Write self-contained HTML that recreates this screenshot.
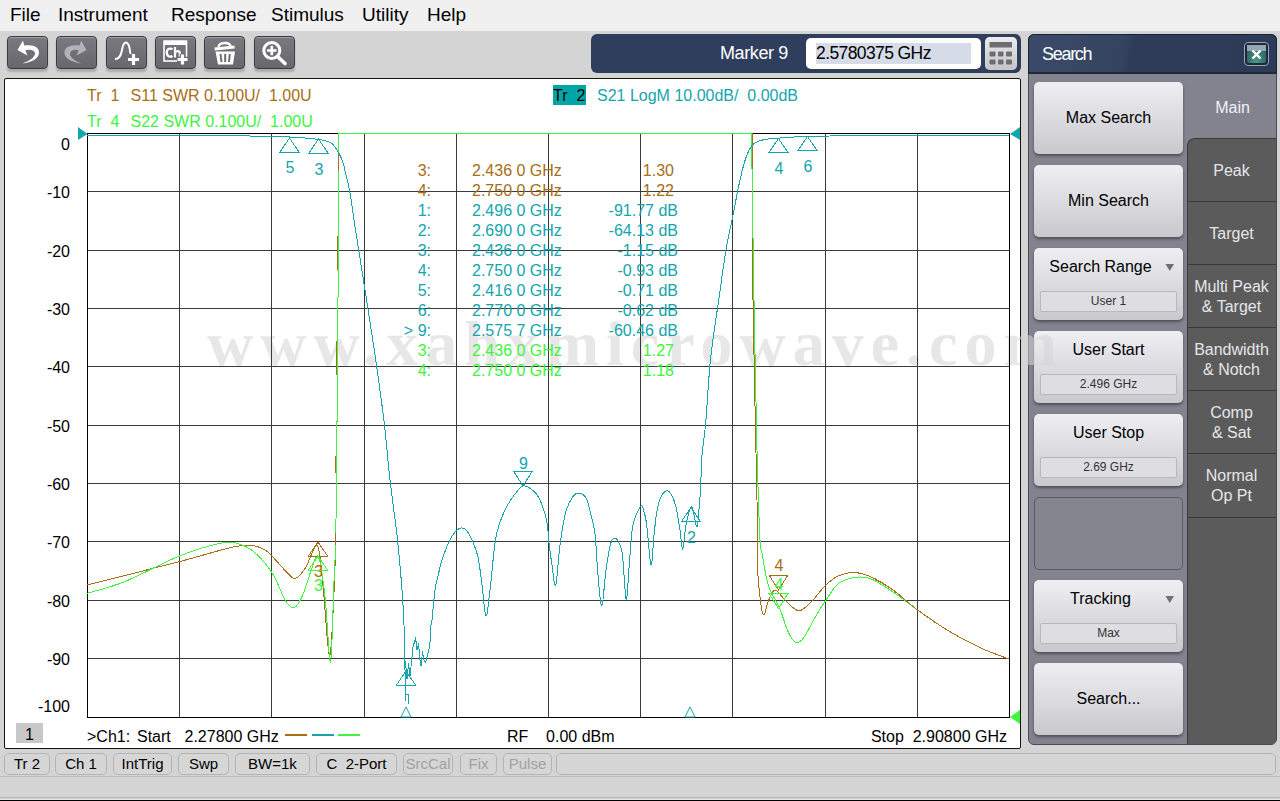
<!DOCTYPE html>
<html><head><meta charset="utf-8">
<style>
*{margin:0;padding:0;box-sizing:border-box}
html,body{width:1280px;height:801px;overflow:hidden;background:#d4d4d4;font-family:"Liberation Sans", sans-serif;}
.a{position:absolute}
.t{position:absolute;white-space:pre;line-height:1}
.tb{position:absolute;top:36px;width:41px;height:33px;border-radius:4px;background:linear-gradient(#7a797f,#68676d);border:1px solid #3c3c40;box-shadow:inset 0 1px 1px rgba(255,255,255,0.3),0 3px 2px rgba(0,0,0,0.2)}
.btn{position:absolute;left:1034px;width:149px;border-radius:5px;background:linear-gradient(#efeef2,#c9c8cc);box-shadow:0 2px 3px rgba(0,0,0,0.4);}
.bl{position:absolute;left:0;width:149px;text-align:center;font-size:16px;color:#000;line-height:1}
.sub{position:absolute;left:6px;width:137px;height:21px;border:1px solid #b8b8bc;background:#dedde2;border-radius:2px;text-align:center;font-size:12px;line-height:19px;color:#333}
.tab{position:absolute;left:1187px;width:89px;height:63px;background:#5b5b5b;border-top:1px solid #3c3c3c;color:#e8e8ec;font-size:16px;text-align:center;line-height:20px}
.sb{position:absolute;white-space:pre;top:753px;height:22px;border:1px solid #b4b4b4;border-radius:5px;background:#d6d6d6;font-size:15px;line-height:20px;text-align:center;color:#000}
</style></head><body>

<div class="a" style="left:0;top:0;width:1280px;height:31px;background:#f0f0f0"></div>
<div class="t" style="left:10px;top:5px;font-size:19px;color:#000">File</div>
<div class="t" style="left:58px;top:5px;font-size:19px;color:#000">Instrument</div>
<div class="t" style="left:171px;top:5px;font-size:19px;color:#000">Response</div>
<div class="t" style="left:271px;top:5px;font-size:19px;color:#000">Stimulus</div>
<div class="t" style="left:362px;top:5px;font-size:19px;color:#000">Utility</div>
<div class="t" style="left:427px;top:5px;font-size:19px;color:#000">Help</div>
<div class="tb" style="left:7px"><svg width="41" height="33" style="position:absolute;left:-1px;top:-1px"><path d="M10.5,14 L16,4.5 L17.2,9.6 C26,8 32.5,11 32,17 C31.5,23 24,26.5 15.5,27.5 C23,24.5 28,21 28,17.5 C28,13.5 22,13 18.2,14.2 L20.5,19.5 Z" fill="#fff"/></svg></div>
<div class="tb" style="left:56px"><svg width="41" height="33" style="position:absolute;left:-1px;top:-1px"><path d="M30.5,14 L25,4.5 L23.8,9.6 C15,8 8,11 8.5,17 C9,23 17,26.5 25.5,27.5 C19,25 13.5,21 14,17.5 C14.5,13.5 19,13 22.8,14.2 L20.5,19.5 Z" fill="#b4b4b8"/></svg></div>
<div class="tb" style="left:106px"><svg width="41" height="33" style="position:absolute;left:-1px;top:-1px"><path d="M9,23 C13,23 15,20 16,14 C17,8 18.5,6.5 20,6.5 C22,6.5 23.5,9 24.5,18" fill="none" stroke="#fff" stroke-width="2"/><path d="M27.5,18 V29 M22,23.5 H33" stroke="#fff" stroke-width="3.2"/></svg></div>
<div class="tb" style="left:155px"><svg width="41" height="33" style="position:absolute;left:-1px;top:-1px"><rect x="9" y="5.2" width="22.5" height="19.8" fill="none" stroke="#fff" stroke-width="1.6"/><rect x="9" y="4.6" width="22.5" height="4.4" fill="#fff"/><path d="M17.5,13.2 C15.5,12 11.8,12.2 11.8,16.6 C11.8,21 15.5,21.2 17.5,20" fill="none" stroke="#fff" stroke-width="2.3"/><path d="M20,11 V21.5 M20,17 C21,14.5 24.8,14.5 24.8,17 V21.5" fill="none" stroke="#fff" stroke-width="2.2"/><path d="M27.5,18 V29 M22,23.5 H33" stroke="#6e6d72" stroke-width="5.5"/><path d="M27.5,18.5 V28.5 M22.5,23.5 H32.5" stroke="#fff" stroke-width="3.2"/></svg></div>
<div class="tb" style="left:204px"><svg width="41" height="33" style="position:absolute;left:-1px;top:-1px"><path d="M14.5,11 C15,6 26,5.5 26.5,10.5" fill="none" stroke="#fff" stroke-width="2.4"/><path d="M10.5,11.5 L30.5,9.5 L30.7,12.6 L10.8,14.6 Z" fill="#fff"/><path d="M11.5,15.5 H31 L29,28.5 H14 Z" fill="#fff"/><path d="M16.5,18 L17.5,26 M21.2,18 V26 M25.8,18 L25,26" stroke="#6e6d72" stroke-width="2"/></svg></div>
<div class="tb" style="left:254px"><svg width="41" height="33" style="position:absolute;left:-1px;top:-1px"><circle cx="17.8" cy="14.5" r="8" fill="none" stroke="#fff" stroke-width="3"/><path d="M17.8,9.8 V19.2 M13.1,14.5 H22.5" stroke="#fff" stroke-width="2.6"/><path d="M23.5,20.5 L31,27.5" stroke="#fff" stroke-width="3.6" stroke-linecap="round"/></svg></div>
<div class="a" style="left:591px;top:34px;width:430px;height:39px;background:#2f3e5d;border-radius:6px"></div>
<div class="t" style="left:720px;top:44px;font-size:18px;letter-spacing:-0.4px;color:#fff">Marker 9</div>
<div class="a" style="left:806px;top:38px;width:175px;height:31px;background:#fff;border-radius:5px"></div>
<div class="a" style="left:816px;top:43px;width:155px;height:21px;background:#d6dce7"></div>
<div class="t" style="left:816px;top:45px;font-size:17.5px;letter-spacing:-0.6px;color:#000">2.5780375 GHz</div>
<div class="a" style="left:985px;top:37px;width:32px;height:33px;background:linear-gradient(#ececee,#c4c4c8);border-radius:5px;box-shadow:inset 0 0 1px #fff"><svg width="32" height="33" style="position:absolute;left:0;top:0"><rect x="4.5" y="5" width="22.5" height="5.5" fill="#6e6e6e"/><g fill="#6e6e6e"><rect x="4.5" y="14.5" width="6" height="5" rx="1"/><rect x="13" y="14.5" width="5.5" height="5" rx="1"/><rect x="21" y="14.5" width="6" height="5" rx="1"/><rect x="4.5" y="22.5" width="6" height="5" rx="1"/><rect x="13" y="22.5" width="5.5" height="5" rx="1"/><rect x="21" y="22.5" width="6" height="5" rx="1"/></g></svg></div>
<div class="a" style="left:4px;top:78px;width:1017px;height:671px;background:#fff;border:1px solid #141408;border-radius:2px"></div>
<div class="a" style="left:1028px;top:34px;width:249px;height:711px;background:#838390;border-radius:6px;border:1px solid #4a4a52"></div>
<div class="a" style="left:1028px;top:34px;width:249px;height:40px;background:linear-gradient(100deg,#3a4a69 0%,#34445f 38%,#2e3c5a 42%,#2d3b58 100%);border:1px solid #1c2232;border-bottom:2px solid #1f2738;border-radius:6px 6px 0 0"></div>
<div class="t" style="left:1042px;top:45px;font-size:18px;letter-spacing:-1.3px;color:#fff">Search</div>
<div class="a" style="left:1244px;top:42px;width:25px;height:24px;border:1px solid #9aa2b4;border-radius:4px;background:#1c2a3a"><div class="a" style="left:2px;top:2px;width:19px;height:18px;border-radius:2px;background:radial-gradient(ellipse at 50% 100%,#4c9a88,#2a5660)"></div><div class="a" style="left:2px;top:2px;width:19px;height:6px;background:#96a6b2"></div><svg width="23" height="22" style="position:absolute;left:0;top:0"><path d="M7.5,7.5 L15.5,15.5 M15.5,7.5 L7.5,15.5" stroke="#fff" stroke-width="2.4"/></svg></div>
<div class="t" style="left:1188px;top:100px;width:89px;text-align:center;font-size:16px;color:#f0f0f4">Main</div>
<div class="a" style="left:1187px;top:138px;width:89px;height:606px;background:#5b5b5b;border-radius:8px 0 0 0;border-bottom-right-radius:5px;border-top:1px solid #3a3a32;border-left:1px solid #3a3a32"></div>
<div class="t" style="left:1187px;top:163px;width:89px;text-align:center;font-size:16px;color:#e6e6ea">Peak</div>
<div class="a" style="left:1187px;top:201px;width:89px;height:1px;background:#3a3a3a"></div>
<div class="t" style="left:1187px;top:226px;width:89px;text-align:center;font-size:16px;color:#e6e6ea">Target</div>
<div class="a" style="left:1187px;top:264px;width:89px;height:1px;background:#3a3a3a"></div>
<div class="t" style="left:1187px;top:279px;width:89px;text-align:center;font-size:16px;color:#e6e6ea">Multi Peak</div>
<div class="t" style="left:1187px;top:299px;width:89px;text-align:center;font-size:16px;color:#e6e6ea">&amp; Target</div>
<div class="a" style="left:1187px;top:327px;width:89px;height:1px;background:#3a3a3a"></div>
<div class="t" style="left:1187px;top:342px;width:89px;text-align:center;font-size:16px;color:#e6e6ea">Bandwidth</div>
<div class="t" style="left:1187px;top:362px;width:89px;text-align:center;font-size:16px;color:#e6e6ea">&amp; Notch</div>
<div class="a" style="left:1187px;top:390px;width:89px;height:1px;background:#3a3a3a"></div>
<div class="t" style="left:1187px;top:405px;width:89px;text-align:center;font-size:16px;color:#e6e6ea">Comp</div>
<div class="t" style="left:1187px;top:425px;width:89px;text-align:center;font-size:16px;color:#e6e6ea">&amp; Sat</div>
<div class="a" style="left:1187px;top:453px;width:89px;height:1px;background:#3a3a3a"></div>
<div class="t" style="left:1187px;top:468px;width:89px;text-align:center;font-size:16px;color:#e6e6ea">Normal</div>
<div class="t" style="left:1187px;top:488px;width:89px;text-align:center;font-size:16px;color:#e6e6ea">Op Pt</div>
<div class="a" style="left:1187px;top:517px;width:89px;height:1px;background:#3a3a3a"></div>
<div class="btn" style="top:82px;height:72px">
<div class="bl" style="top:28px">Max Search</div>
</div>
<div class="btn" style="top:165px;height:72px">
<div class="bl" style="top:28px">Min Search</div>
</div>
<div class="btn" style="top:248px;height:72px">
<div class="bl" style="top:11px;left:-8px">Search Range</div>
<svg width="12" height="10" style="position:absolute;left:130px;top:14px"><path d="M1.5,2 H10 L5.75,9 Z" fill="#707074"/></svg>
<div class="sub" style="top:43px">User 1</div>
</div>
<div class="btn" style="top:331px;height:72px">
<div class="bl" style="top:11px">User Start</div>
<div class="sub" style="top:43px">2.496 GHz</div>
</div>
<div class="btn" style="top:414px;height:72px">
<div class="bl" style="top:11px">User Stop</div>
<div class="sub" style="top:43px">2.69 GHz</div>
</div>
<div class="a" style="left:1034px;top:497px;width:149px;height:73px;border-radius:5px;background:#85858f;border:1px solid #5a5a62"></div>
<div class="btn" style="top:580px;height:72px">
<div class="bl" style="top:11px;left:-8px">Tracking</div>
<svg width="12" height="10" style="position:absolute;left:130px;top:14px"><path d="M1.5,2 H10 L5.75,9 Z" fill="#707074"/></svg>
<div class="sub" style="top:43px">Max</div>
</div>
<div class="btn" style="top:663px;height:72px">
<div class="bl" style="top:28px">Search...</div>
</div>
<div class="a" style="left:0;top:776px;width:1280px;height:1px;background:#bdbdbd"></div>
<div class="a" style="left:0;top:777px;width:1280px;height:21px;background:#d4d4d4"></div>
<div class="a" style="left:0;top:797px;width:1280px;height:1px;background:#b6b6b6"></div>
<div class="a" style="left:0;top:798px;width:1280px;height:1px;background:#d2d2d2"></div>
<div class="a" style="left:0;top:799px;width:1280px;height:1px;background:#e2e2e2"></div>
<div class="a" style="left:0;top:800px;width:1280px;height:1px;background:#000"></div>
<div class="sb" style="left:4px;width:46px;color:#000">Tr 2</div>
<div class="sb" style="left:55px;width:52px;color:#000">Ch 1</div>
<div class="sb" style="left:113px;width:59px;color:#000">IntTrig</div>
<div class="sb" style="left:178px;width:51px;color:#000">Swp</div>
<div class="sb" style="left:235px;width:75px;color:#000">BW=1k</div>
<div class="sb" style="left:316px;width:81px;color:#000">C  2-Port</div>
<div class="sb" style="left:403px;width:50px;color:#a0a0a0">SrcCal</div>
<div class="sb" style="left:460px;width:37px;color:#a0a0a0">Fix</div>
<div class="sb" style="left:503px;width:49px;color:#a0a0a0">Pulse</div>
<div class="sb" style="left:556px;width:720px;color:#000"></div>
<svg class="a" style="left:0;top:0" width="1280" height="801"><text x="207" y="365" font-family="Liberation Serif" font-weight="bold" font-size="64" fill="rgb(212,212,212)" fill-opacity="0.56" letter-spacing="7">www.xahxmicrowave.com</text></svg>
<svg class="a" style="left:0;top:0" width="1280" height="801">
<line x1="179.5" y1="133" x2="179.5" y2="718" stroke="#3a3a3a" stroke-width="1"/>
<line x1="271.5" y1="133" x2="271.5" y2="718" stroke="#3a3a3a" stroke-width="1"/>
<line x1="364.5" y1="133" x2="364.5" y2="718" stroke="#3a3a3a" stroke-width="1"/>
<line x1="456.5" y1="133" x2="456.5" y2="718" stroke="#3a3a3a" stroke-width="1"/>
<line x1="548.5" y1="133" x2="548.5" y2="718" stroke="#3a3a3a" stroke-width="1"/>
<line x1="640.5" y1="133" x2="640.5" y2="718" stroke="#3a3a3a" stroke-width="1"/>
<line x1="732.5" y1="133" x2="732.5" y2="718" stroke="#3a3a3a" stroke-width="1"/>
<line x1="825.5" y1="133" x2="825.5" y2="718" stroke="#3a3a3a" stroke-width="1"/>
<line x1="917.5" y1="133" x2="917.5" y2="718" stroke="#3a3a3a" stroke-width="1"/>
<line x1="87" y1="191.5" x2="1010" y2="191.5" stroke="#3a3a3a" stroke-width="1"/>
<line x1="87" y1="250.5" x2="1010" y2="250.5" stroke="#3a3a3a" stroke-width="1"/>
<line x1="87" y1="308.5" x2="1010" y2="308.5" stroke="#3a3a3a" stroke-width="1"/>
<line x1="87" y1="366.5" x2="1010" y2="366.5" stroke="#3a3a3a" stroke-width="1"/>
<line x1="87" y1="425.5" x2="1010" y2="425.5" stroke="#3a3a3a" stroke-width="1"/>
<line x1="87" y1="483.5" x2="1010" y2="483.5" stroke="#3a3a3a" stroke-width="1"/>
<line x1="87" y1="541.5" x2="1010" y2="541.5" stroke="#3a3a3a" stroke-width="1"/>
<line x1="87" y1="600.5" x2="1010" y2="600.5" stroke="#3a3a3a" stroke-width="1"/>
<line x1="87" y1="658.5" x2="1010" y2="658.5" stroke="#3a3a3a" stroke-width="1"/>
<rect x="87.5" y="133.5" width="922" height="584" fill="none" stroke="#000" stroke-width="1"/>
<path d="M87.00,585.00 C102.42,581.10 155.17,567.93 179.50,561.60 C203.83,555.27 220.78,549.67 233.00,547.00 C245.22,544.33 247.30,545.00 252.80,545.60 C258.30,546.20 261.97,547.93 266.00,550.60 C270.03,553.27 273.33,557.77 277.00,561.60 C280.67,565.43 284.92,570.80 288.00,573.60 C291.08,576.40 292.60,579.33 295.50,578.40 C298.40,577.47 301.75,573.40 305.40,568.00 C309.05,562.60 314.47,543.07 317.40,546.00 C320.33,548.93 321.00,567.32 323.00,585.60 C325.00,603.88 327.60,653.87 329.40,655.70 C331.20,657.53 332.70,619.22 333.80,596.60 C334.90,573.98 335.30,569.43 336.00,520.00 C336.70,470.57 337.58,364.42 338.00,300.00 C338.42,235.58 338.42,161.25 338.50,133.50" fill="none" stroke="#a86e14" stroke-width="1.0" shape-rendering="crispEdges" />
<polyline points="338.5,133.5 752.0,133.5" fill="none" stroke="#a86e14" stroke-width="1.0" stroke-linejoin="round" shape-rendering="crispEdges" />
<path d="M752.00,133.50 C752.17,161.25 752.17,238.92 753.00,300.00 C753.83,361.08 756.25,455.67 757.00,500.00 C757.50,544.33 757.00,548.83 757.50,566.00 C758.13,583.17 759.72,594.83 760.80,603.00 C761.88,611.17 762.73,615.33 764.00,615.00 C765.27,614.67 766.57,605.17 768.40,601.00 C770.23,596.83 772.07,590.00 775.00,590.00 C777.93,590.00 782.00,597.53 786.00,601.00 C790.00,604.47 794.67,610.80 799.00,610.80 C803.33,610.80 807.62,605.20 812.00,601.00 C816.38,596.80 820.88,589.80 825.30,585.60 C829.72,581.40 833.75,577.98 838.50,575.80 C843.25,573.62 848.33,572.30 853.80,572.50 C859.27,572.70 864.77,574.08 871.30,577.00 C877.83,579.92 885.35,584.55 893.00,590.00 C900.65,595.45 908.05,602.95 917.20,609.70 C926.35,616.45 937.32,624.12 947.90,630.50 C958.48,636.88 970.52,643.25 980.70,648.00 C990.88,652.75 1004.28,657.17 1009.00,659.00" fill="none" stroke="#a86e14" stroke-width="1.0" shape-rendering="crispEdges" />
<path d="M87.00,593.30 C93.13,591.42 108.38,588.22 123.80,582.00 C139.22,575.78 163.47,562.43 179.50,556.00 C195.53,549.57 210.33,545.50 220.00,543.40 C229.67,541.30 231.67,541.83 237.50,543.40 C243.33,544.97 249.17,547.77 255.00,552.80 C260.83,557.83 267.38,565.57 272.50,573.60 C277.62,581.63 282.05,595.35 285.70,601.00 C289.35,606.65 291.52,608.60 294.40,607.50 C297.28,606.40 300.07,600.98 303.00,594.40 C305.93,587.82 309.42,574.23 312.00,568.00 C314.58,561.77 316.33,552.23 318.50,557.00 C320.67,561.77 323.00,579.10 325.00,596.60 C327.00,614.10 329.03,663.83 330.50,662.00 C331.97,660.17 332.88,609.27 333.80,585.60 C334.72,561.93 335.30,567.60 336.00,520.00 C336.70,472.40 337.58,364.42 338.00,300.00 C338.42,235.58 338.42,161.25 338.50,133.50" fill="none" stroke="#3cf53c" stroke-width="1.0" shape-rendering="crispEdges" />
<polyline points="338.5,133.5 751.5,133.5" fill="none" stroke="#3cf53c" stroke-width="1.0" stroke-linejoin="round" shape-rendering="crispEdges" />
<path d="M751.50,133.50 C751.92,161.25 753.08,247.25 754.00,300.00 C754.92,352.75 756.00,410.00 757.00,450.00 C758.00,490.00 759.17,522.87 760.00,540.00 C760.83,557.13 760.60,545.20 762.00,552.80 C763.40,560.40 765.50,576.48 768.40,585.60 C771.30,594.72 776.13,599.83 779.40,607.50 C782.67,615.17 785.27,625.77 788.00,631.60 C790.73,637.43 793.22,641.43 795.80,642.50 C798.38,643.57 800.40,642.00 803.50,638.00 C806.60,634.00 810.77,624.67 814.40,618.50 C818.03,612.33 821.28,606.83 825.30,601.00 C829.32,595.17 833.38,587.45 838.50,583.50 C843.62,579.55 850.53,578.05 856.00,577.30 C861.47,576.55 865.13,576.55 871.30,579.00 C877.47,581.45 885.35,586.88 893.00,592.00 C900.65,597.12 908.05,603.28 917.20,609.70 C926.35,616.12 937.32,624.12 947.90,630.50 C958.48,636.88 970.52,643.25 980.70,648.00 C990.88,652.75 1004.28,657.17 1009.00,659.00" fill="none" stroke="#3cf53c" stroke-width="1.0" shape-rendering="crispEdges" />
<path d="M871.30,577.00 C874.92,579.17 885.35,584.55 893.00,590.00 C900.65,595.45 908.05,602.95 917.20,609.70 C926.35,616.45 937.32,624.12 947.90,630.50 C958.48,636.88 970.52,643.25 980.70,648.00 C990.88,652.75 1004.28,657.17 1009.00,659.00" fill="none" stroke="#a86e14" stroke-width="1.0" shape-rendering="crispEdges" />
<line x1="338.5" y1="152" x2="338.5" y2="171" stroke="#a86e14" stroke-width="1" shape-rendering="crispEdges"/>
<line x1="337.5" y1="236" x2="337.5" y2="270" stroke="#a86e14" stroke-width="1" shape-rendering="crispEdges"/>
<line x1="336.5" y1="341" x2="336.5" y2="375" stroke="#a86e14" stroke-width="1" shape-rendering="crispEdges"/>
<line x1="335.5" y1="456" x2="335.5" y2="473" stroke="#a86e14" stroke-width="1" shape-rendering="crispEdges"/>
<line x1="335.5" y1="533" x2="335.5" y2="545" stroke="#a86e14" stroke-width="1" shape-rendering="crispEdges"/>
<path d="M87.00,135.50 C114.17,135.58 216.17,135.75 250.00,136.00 C283.83,136.25 280.00,136.58 290.00,137.00 C300.00,137.42 304.67,138.00 310.00,138.50 C315.33,139.00 318.83,139.42 322.00,140.00 C325.17,140.58 327.17,141.25 329.00,142.00 C330.83,142.75 331.67,143.17 333.00,144.50 C334.33,145.83 335.42,147.25 337.00,150.00 C338.58,152.75 341.00,156.83 342.50,161.00 C344.00,165.17 344.75,169.75 346.00,175.00 C347.25,180.25 348.67,185.00 350.00,192.50 C351.33,200.00 352.55,210.42 354.00,220.00 C355.45,229.58 356.87,238.33 358.70,250.00 C360.53,261.67 363.12,278.00 365.00,290.00 C366.88,302.00 368.03,309.10 370.00,322.00 C371.97,334.90 374.42,350.47 376.80,367.40 C379.18,384.33 382.10,404.87 384.30,423.60 C386.50,442.33 387.80,460.45 390.00,479.80 C392.20,499.15 395.50,521.33 397.50,539.70 C399.50,558.07 400.92,575.78 402.00,590.00 C403.08,604.22 403.60,611.67 404.00,625.00 C404.40,638.33 404.33,662.50 404.40,670.00" fill="none" stroke="#14a5ad" stroke-width="1.0" shape-rendering="crispEdges" />
<polyline points="404.4,670.0 405.5,662.0 407.0,679.0 408.5,664.0 410.0,676.0 411.5,662.0 413.0,647.0 415.6,638.0 417.0,650.0 418.5,644.0 420.0,660.0 421.0,666.0 422.5,652.0 424.0,660.0 425.6,663.0 428.8,650.0 430.0,642.5 430.6,627.5 432.0,620.0" fill="none" stroke="#14a5ad" stroke-width="1.0" stroke-linejoin="round" shape-rendering="crispEdges" />
<path d="M432.00,620.00 C432.50,615.00 434.00,597.33 435.00,590.00 C436.00,582.67 436.83,581.00 438.00,576.00 C439.17,571.00 440.00,566.05 442.00,560.00 C444.00,553.95 447.50,544.70 450.00,539.70 C452.50,534.70 455.00,531.95 457.00,530.00 C459.00,528.05 460.33,527.83 462.00,528.00 C463.67,528.17 465.33,529.00 467.00,531.00 C468.67,533.00 470.17,535.67 472.00,540.00 C473.83,544.33 476.33,549.50 478.00,557.00 C479.67,564.50 480.67,575.17 482.00,585.00 C483.33,594.83 484.67,615.17 486.00,616.00 C487.33,616.83 488.33,603.17 490.00,590.00 C491.67,576.83 493.50,550.33 496.00,537.00 C498.50,523.67 501.83,517.17 505.00,510.00 C508.17,502.83 512.00,498.00 515.00,494.00 C518.00,490.00 520.33,486.83 523.00,486.00 C525.67,485.17 528.33,487.00 531.00,489.00 C533.67,491.00 536.38,492.67 539.00,498.00 C541.62,503.33 545.03,513.50 546.70,521.00 C548.37,528.50 548.12,535.67 549.00,543.00 C549.88,550.33 550.88,558.00 552.00,565.00 C553.12,572.00 554.37,588.33 555.70,585.00 C557.03,581.67 558.32,557.17 560.00,545.00 C561.68,532.83 563.80,519.83 565.80,512.00 C567.80,504.17 569.97,501.17 572.00,498.00 C574.03,494.83 575.67,493.00 578.00,493.00 C580.33,493.00 583.83,494.33 586.00,498.00 C588.17,501.67 589.50,509.00 591.00,515.00 C592.50,521.00 593.83,524.00 595.00,534.00 C596.17,544.00 596.87,563.00 598.00,575.00 C599.13,587.00 600.47,606.83 601.80,606.00 C603.13,605.17 604.50,580.50 606.00,570.00 C607.50,559.50 609.07,548.17 610.80,543.00 C612.53,537.83 614.53,537.50 616.40,539.00 C618.27,540.50 620.73,546.00 622.00,552.00 C623.27,558.00 623.25,567.08 624.00,575.00 C624.75,582.92 625.50,602.83 626.50,599.50 C627.50,596.17 628.92,567.42 630.00,555.00 C631.08,542.58 631.22,533.17 633.00,525.00 C634.78,516.83 638.87,508.17 640.70,506.00 C642.53,503.83 643.00,508.83 644.00,512.00 C645.00,515.17 645.53,516.22 646.70,525.00 C647.87,533.78 649.78,563.03 651.00,564.70 C652.22,566.37 653.03,543.78 654.00,535.00 C654.97,526.22 655.63,518.33 656.80,512.00 C657.97,505.67 659.30,500.57 661.00,497.00 C662.70,493.43 665.17,490.77 667.00,490.60 C668.83,490.43 670.50,493.27 672.00,496.00 C673.50,498.73 674.67,501.33 676.00,507.00 C677.33,512.67 678.88,523.00 680.00,530.00 C681.12,537.00 681.70,549.83 682.70,549.00 C683.70,548.17 684.62,532.00 686.00,525.00 C687.38,518.00 689.67,508.67 691.00,507.00 C692.33,505.33 693.00,511.67 694.00,515.00 C695.00,518.33 696.17,528.00 697.00,527.00 C697.83,526.00 698.42,515.17 699.00,509.00 C699.58,502.83 700.00,499.00 700.50,490.00 C701.00,481.00 701.13,466.17 702.00,455.00 C702.87,443.83 704.27,439.10 705.70,423.00 C707.13,406.90 708.43,378.90 710.60,358.40 C712.77,337.90 716.13,318.07 718.70,300.00 C721.27,281.93 723.70,263.75 726.00,250.00 C728.30,236.25 730.17,229.17 732.50,217.50 C734.83,205.83 737.75,190.00 740.00,180.00 C742.25,170.00 743.92,163.33 746.00,157.50 C748.08,151.67 749.75,147.92 752.50,145.00 C755.25,142.08 757.92,141.17 762.50,140.00 C767.08,138.83 768.75,138.67 780.00,138.00 C791.25,137.33 791.83,136.42 830.00,136.00 C868.17,135.58 979.17,135.58 1009.00,135.50" fill="none" stroke="#14a5ad" stroke-width="1.0" shape-rendering="crispEdges" />
<line x1="405.5" y1="670" x2="405.5" y2="701" stroke="#14a5ad" stroke-width="1" shape-rendering="crispEdges"/>
<polygon points="289.5,138 280.0,152 299.0,152" fill="none" stroke="#14a5ad" stroke-width="1" shape-rendering="crispEdges"/>
<text x="290.0" y="173" text-anchor="middle" font-size="16" fill="#14a5ad">5</text>
<polygon points="318.5,139 309.0,153 328.0,153" fill="none" stroke="#14a5ad" stroke-width="1" shape-rendering="crispEdges"/>
<text x="319.0" y="175" text-anchor="middle" font-size="16" fill="#14a5ad">3</text>
<polygon points="778.5,138.5 769.0,152.5 788.0,152.5" fill="none" stroke="#14a5ad" stroke-width="1" shape-rendering="crispEdges"/>
<text x="779.0" y="174" text-anchor="middle" font-size="16" fill="#14a5ad">4</text>
<polygon points="807.5,136.5 798.0,150.5 817.0,150.5" fill="none" stroke="#14a5ad" stroke-width="1" shape-rendering="crispEdges"/>
<text x="808.0" y="172" text-anchor="middle" font-size="16" fill="#14a5ad">6</text>
<polygon points="406,671 396.5,685 415.5,685" fill="none" stroke="#14a5ad" stroke-width="1" shape-rendering="crispEdges"/>
<path d="M406,694.5 H408.5 V704" fill="none" stroke="#14a5ad" stroke-width="1.5" shape-rendering="crispEdges"/>
<polygon points="691,507.5 681.5,521.5 700.5,521.5" fill="none" stroke="#14a5ad" stroke-width="1" shape-rendering="crispEdges"/>
<text x="691.5" y="543" text-anchor="middle" font-size="16" fill="#14a5ad">2</text>
<polygon points="523,486 513.5,471 532.5,471" fill="none" stroke="#14a5ad" stroke-width="1" shape-rendering="crispEdges"/>
<text x="523.5" y="469" text-anchor="middle" font-size="16" fill="#14a5ad">9</text>
<polygon points="318,542 308.5,556 327.5,556" fill="none" stroke="#a86e14" stroke-width="1" shape-rendering="crispEdges"/>
<text x="318.5" y="577" text-anchor="middle" font-size="16" fill="#a86e14">3</text>
<polygon points="318,556 308.5,570 327.5,570" fill="none" stroke="#3cf53c" stroke-width="1" shape-rendering="crispEdges"/>
<text x="318.5" y="591" text-anchor="middle" font-size="16" fill="#3cf53c">3</text>
<polygon points="778.5,590 769.0,575 788.0,575" fill="none" stroke="#a86e14" stroke-width="1" shape-rendering="crispEdges"/>
<text x="779.0" y="571" text-anchor="middle" font-size="16" fill="#a86e14">4</text>
<polygon points="778.5,608.5 769.0,593.5 788.0,593.5" fill="none" stroke="#3cf53c" stroke-width="1" shape-rendering="crispEdges"/>
<text x="779.0" y="590" text-anchor="middle" font-size="16" fill="#3cf53c">4</text>
<polygon points="406,707 401,717 411,717" fill="none" stroke="#14a5ad" stroke-width="1"/>
<polygon points="690,707 685,717 695,717" fill="none" stroke="#14a5ad" stroke-width="1"/>
<polygon points="78,127 87.5,134 78,140" fill="#14a5ad"/>
<polygon points="1020,127 1010,134 1020,140" fill="#14a5ad"/>
<polygon points="1020,710 1010,717 1020,724" fill="#3cf53c"/>
<text x="87" y="101" font-size="16" fill="#a86e14" text-anchor="start"  xml:space="preserve">Tr  1</text>
<text x="130.5" y="101" font-size="16" fill="#a86e14" text-anchor="start"  xml:space="preserve">S11 SWR 0.100U/  1.00U</text>
<text x="87" y="127" font-size="16" fill="#3cf53c" text-anchor="start"  xml:space="preserve">Tr  4</text>
<text x="130.5" y="127" font-size="16" fill="#3cf53c" text-anchor="start"  xml:space="preserve">S22 SWR 0.100U/  1.00U</text>
<rect x="553" y="85" width="33" height="20" fill="#00a6a6"/>
<text x="553" y="101" font-size="16" fill="#000" text-anchor="start"  xml:space="preserve">Tr  2</text>
<text x="597" y="101" font-size="16" fill="#14a5ad" text-anchor="start"  xml:space="preserve">S21 LogM 10.00dB/  0.00dB</text>
<text x="70" y="149.5" font-size="16" fill="#000" text-anchor="end"  xml:space="preserve">0</text>
<text x="70" y="197.5" font-size="16" fill="#000" text-anchor="end"  xml:space="preserve">-10</text>
<text x="70" y="256.5" font-size="16" fill="#000" text-anchor="end"  xml:space="preserve">-20</text>
<text x="70" y="314.5" font-size="16" fill="#000" text-anchor="end"  xml:space="preserve">-30</text>
<text x="70" y="372.5" font-size="16" fill="#000" text-anchor="end"  xml:space="preserve">-40</text>
<text x="70" y="431.5" font-size="16" fill="#000" text-anchor="end"  xml:space="preserve">-50</text>
<text x="70" y="489.5" font-size="16" fill="#000" text-anchor="end"  xml:space="preserve">-60</text>
<text x="70" y="547.5" font-size="16" fill="#000" text-anchor="end"  xml:space="preserve">-70</text>
<text x="70" y="606.5" font-size="16" fill="#000" text-anchor="end"  xml:space="preserve">-80</text>
<text x="70" y="664.5" font-size="16" fill="#000" text-anchor="end"  xml:space="preserve">-90</text>
<text x="70" y="711.5" font-size="16" fill="#000" text-anchor="end"  xml:space="preserve">-100</text>
<text x="431" y="176" font-size="16" fill="#a86e14" text-anchor="end"  xml:space="preserve">3:</text>
<text x="472" y="176" font-size="16" fill="#a86e14" text-anchor="start"  xml:space="preserve">2.436 0 GHz</text>
<text x="674" y="176" font-size="16" fill="#a86e14" text-anchor="end"  xml:space="preserve">1.30</text>
<text x="431" y="196" font-size="16" fill="#a86e14" text-anchor="end"  xml:space="preserve">4:</text>
<text x="472" y="196" font-size="16" fill="#a86e14" text-anchor="start"  xml:space="preserve">2.750 0 GHz</text>
<text x="674" y="196" font-size="16" fill="#a86e14" text-anchor="end"  xml:space="preserve">1.22</text>
<text x="431" y="216" font-size="16" fill="#14a5ad" text-anchor="end"  xml:space="preserve">1:</text>
<text x="472" y="216" font-size="16" fill="#14a5ad" text-anchor="start"  xml:space="preserve">2.496 0 GHz</text>
<text x="678" y="216" font-size="16" fill="#14a5ad" text-anchor="end"  xml:space="preserve">-91.77 dB</text>
<text x="431" y="236" font-size="16" fill="#14a5ad" text-anchor="end"  xml:space="preserve">2:</text>
<text x="472" y="236" font-size="16" fill="#14a5ad" text-anchor="start"  xml:space="preserve">2.690 0 GHz</text>
<text x="678" y="236" font-size="16" fill="#14a5ad" text-anchor="end"  xml:space="preserve">-64.13 dB</text>
<text x="431" y="256" font-size="16" fill="#14a5ad" text-anchor="end"  xml:space="preserve">3:</text>
<text x="472" y="256" font-size="16" fill="#14a5ad" text-anchor="start"  xml:space="preserve">2.436 0 GHz</text>
<text x="678" y="256" font-size="16" fill="#14a5ad" text-anchor="end"  xml:space="preserve">-1.15 dB</text>
<text x="431" y="276" font-size="16" fill="#14a5ad" text-anchor="end"  xml:space="preserve">4:</text>
<text x="472" y="276" font-size="16" fill="#14a5ad" text-anchor="start"  xml:space="preserve">2.750 0 GHz</text>
<text x="678" y="276" font-size="16" fill="#14a5ad" text-anchor="end"  xml:space="preserve">-0.93 dB</text>
<text x="431" y="296" font-size="16" fill="#14a5ad" text-anchor="end"  xml:space="preserve">5:</text>
<text x="472" y="296" font-size="16" fill="#14a5ad" text-anchor="start"  xml:space="preserve">2.416 0 GHz</text>
<text x="678" y="296" font-size="16" fill="#14a5ad" text-anchor="end"  xml:space="preserve">-0.71 dB</text>
<text x="431" y="316" font-size="16" fill="#14a5ad" text-anchor="end"  xml:space="preserve">6:</text>
<text x="472" y="316" font-size="16" fill="#14a5ad" text-anchor="start"  xml:space="preserve">2.770 0 GHz</text>
<text x="678" y="316" font-size="16" fill="#14a5ad" text-anchor="end"  xml:space="preserve">-0.62 dB</text>
<text x="431" y="336" font-size="16" fill="#14a5ad" text-anchor="end"  xml:space="preserve">&gt; 9:</text>
<text x="472" y="336" font-size="16" fill="#14a5ad" text-anchor="start"  xml:space="preserve">2.575 7 GHz</text>
<text x="678" y="336" font-size="16" fill="#14a5ad" text-anchor="end"  xml:space="preserve">-60.46 dB</text>
<text x="431" y="356" font-size="16" fill="#3cf53c" text-anchor="end"  xml:space="preserve">3:</text>
<text x="472" y="356" font-size="16" fill="#3cf53c" text-anchor="start"  xml:space="preserve">2.436 0 GHz</text>
<text x="674" y="356" font-size="16" fill="#3cf53c" text-anchor="end"  xml:space="preserve">1.27</text>
<text x="431" y="376" font-size="16" fill="#3cf53c" text-anchor="end"  xml:space="preserve">4:</text>
<text x="472" y="376" font-size="16" fill="#3cf53c" text-anchor="start"  xml:space="preserve">2.750 0 GHz</text>
<text x="674" y="376" font-size="16" fill="#3cf53c" text-anchor="end"  xml:space="preserve">1.18</text>
<rect x="16" y="723" width="27" height="20" fill="#c8c8c8"/>
<text x="29.5" y="740" font-size="16" fill="#000" text-anchor="middle"  xml:space="preserve">1</text>
<text x="87" y="742" font-size="16" fill="#000" text-anchor="start"  xml:space="preserve">&gt;Ch1:</text>
<text x="137" y="742" font-size="16" fill="#000" text-anchor="start"  xml:space="preserve">Start</text>
<text x="184.5" y="742" font-size="16" fill="#000" text-anchor="start"  xml:space="preserve">2.27800 GHz</text>
<line x1="285" y1="735" x2="307" y2="735" stroke="#a86e14" stroke-width="2"/>
<line x1="312" y1="735" x2="334" y2="735" stroke="#14a5ad" stroke-width="2"/>
<line x1="338" y1="735" x2="360" y2="735" stroke="#3cf53c" stroke-width="2"/>
<text x="507" y="742" font-size="16" fill="#000" text-anchor="start"  xml:space="preserve">RF    0.00 dBm</text>
<text x="1007" y="742" font-size="16" fill="#000" text-anchor="end"  xml:space="preserve">Stop  2.90800 GHz</text>
</svg>
</body></html>
